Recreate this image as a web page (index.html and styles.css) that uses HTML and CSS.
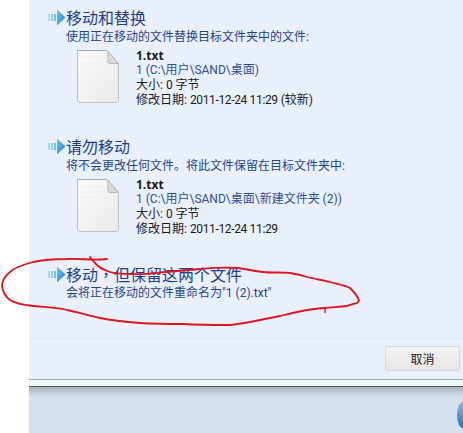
FILE: index.html
```html
<!DOCTYPE html>
<html lang="zh-CN">
<head>
    <meta charset="UTF-8">
    <title>移动文件</title>
    <link rel="stylesheet" href="styles.css">
</head>
<body>
    <svg class="defs" width="0" height="0">
        <defs>
            <linearGradient id="headFill" x1="0" y1="0" x2="1" y2="1">
                <stop offset="0" stop-color="#6cc8f2"/>
                <stop offset="1" stop-color="#1c7fd6"/>
            </linearGradient>
            <linearGradient id="pageFill" x1="0" y1="0" x2="1" y2="1">
                <stop offset="0" stop-color="#fbfbfb"/>
                <stop offset="1" stop-color="#e9e9e9"/>
            </linearGradient>
            <symbol id="arrow" viewBox="0 0 19 17">
                <rect x="1" y="5" width="2" height="7" fill="#a9dcf5"/>
                <rect x="4" y="5" width="2" height="7" fill="#8fd0f2"/>
                <rect x="7" y="5" width="2" height="7" fill="#6fc1ee"/>
                <path d="M10 0.5 L18.5 8.5 L10 16.5 Z" fill="url(#headFill)"/>
            </symbol>
            <symbol id="doc" viewBox="0 0 42 54">
                <path d="M0.5 1.5 H30 L41.5 14 V51 Q41.5 53.5 39 53.5 H3 Q0.5 53.5 0.5 51 Z" fill="url(#pageFill)" stroke="#c0c0c0"/>
                <path d="M0.5 1.5 H30" stroke="#8f8f8f" stroke-dasharray="1 1" fill="none"/>
                <path d="M31 2 V12 Q31 14.5 33 14.5 H41 Z" fill="#dcdcdc" stroke="#b8b8b8"/>
                <path d="M4 8 H27 M4 14 H27 M4 20 H38 M4 26 H38 M4 32 H38 M4 38 H38 M4 44 H38" stroke="#efefef" fill="none"/>
            </symbol>
        </defs>
    </svg>

    <div class="gutter"></div>

    <div class="dialog">
        <div class="options">
            <section class="option option-first">
                <div class="option-title">
                    <svg class="arrow-icon"><use href="#arrow"/></svg>
                    <h2>移动和替换</h2>
                </div>
                <p class="option-desc">使用正在移动的文件替换目标文件夹中的文件:</p>
                <div class="file-info">
                    <svg class="doc-icon"><use href="#doc"/></svg>
                    <div class="file-lines">
                        <div class="file-name">1.txt</div>
                        <div class="file-path">1 (C:\用户\SAND\桌面)</div>
                        <div>大小: 0 字节</div>
                        <div>修改日期: <span class="stamp">2011-12-24 11:29</span> (较新)</div>
                    </div>
                </div>
            </section>

            <section class="option option-second">
                <div class="option-title">
                    <svg class="arrow-icon"><use href="#arrow"/></svg>
                    <h2>请勿移动</h2>
                </div>
                <p class="option-desc">将不会更改任何文件。将此文件保留在目标文件夹中:</p>
                <div class="file-info">
                    <svg class="doc-icon"><use href="#doc"/></svg>
                    <div class="file-lines">
                        <div class="file-name">1.txt</div>
                        <div class="file-path">1 (C:\用户\SAND\桌面\新建文件夹 (2))</div>
                        <div>大小: 0 字节</div>
                        <div>修改日期: <span class="stamp">2011-12-24 11:29</span></div>
                    </div>
                </div>
            </section>

            <section class="option option-third">
                <div class="option-title">
                    <svg class="arrow-icon"><use href="#arrow"/></svg>
                    <h2>移动<span class="mid-comma" lang="zh-TW">，</span>但保留这两个文件</h2>
                </div>
                <p class="option-desc option-desc-tight">会将正在移动的文件重命名为"1 (2).txt"</p>
            </section>
        </div>

        <div class="actions">
            <button class="cancel-btn">取消</button>
        </div>
        <div class="frame-edge"></div>
        <div class="frame-shadow"></div>
        <div class="frame-bottom"></div>
    </div>

    <!-- piece of the desktop orb showing at the right edge -->
    <div class="orb"></div>

    <!-- red pen annotation drawn over the screenshot -->
    <svg class="pen-mark" width="463" height="433" viewBox="0 0 463 433">
        <path d="M107 259 C92 261 80 258 67 259 C52 259 42 260 33 262 C22 265 14 268 10 272 C4 277 2 281 2 286 C3 293 6 297 10 300 C16 304 24 305 33 306 C44 307 55 307 67 310 C78 312 90 316 100 318 C114 321 126 322 140 323 C155 324 170 324 183 324 C200 325 216 325 230 325 C238 324 244 323 250 322 C260 320 270 318 280 316 C296 312 310 309 323 308 C332 307 340 307 347 306 C351 304 354 304 357 303 C359 302 359 300 358 298 C356 294 353 291 350 288 C344 285 337 284 330 282 C322 280 315 279 307 277 C301 275 296 274 290 273 C282 272 272 273 263 272 C254 271 246 269 237 268 C225 267 212 268 200 269 C188 270 178 271 167 272 C155 273 144 275 133 274 C124 274 116 274 110 272 C104 270 100 268 97 265 C94 262 92 260 90 257" fill="none" stroke="#e0141c" stroke-width="1.8" stroke-linecap="round" stroke-linejoin="round"/>
        <path d="M325 307 V313" fill="none" stroke="#e0141c" stroke-width="1.4"/>
    </svg>
</body>
</html>
```

FILE: styles.css
```css
html, body {
    height: 100%;
}

body {
    margin: 0;
    display: flex;
    height: 433px;
    overflow: hidden;
    background-color: white;
    font-family: Roboto, "Noto Sans CJK SC", sans-serif;
    font-size: 12px;
    color: #1a1a1a;
}

.defs {
    position: absolute;
}

.gutter {
    width: 29px;
    flex-shrink: 0;
}

.dialog {
    flex: 1;
    display: flex;
    flex-direction: column;
    background-color: #e9f0fb;
}

.options {
    height: 339px;
    flex-shrink: 0;
    box-sizing: border-box;
    border-bottom: 1px solid #dfe7f4;
}

.option {
    padding-left: 18px;
}

.option-first {
    padding-top: 5px;
}

.option-second {
    padding-top: 26px;
}

.option-third {
    padding-top: 25px;
}

.option-title {
    display: flex;
    align-items: center;
    height: 24px;
}

.arrow-icon {
    width: 19px;
    height: 17px;
    flex-shrink: 0;
}

h2 {
    margin: 0;
    font-size: 16px;
    font-weight: normal;
    font-family: "Noto Sans CJK SC", sans-serif;
    color: #1f3f8f;
}

.mid-comma {
    font-family: "Noto Sans CJK TC", sans-serif;
}

.option-desc {
    margin: 0 0 0 19px;
    line-height: 16px;
    color: #1f4591;
}

.option-desc-tight {
    margin-top: -1px;
}

.file-info {
    display: flex;
    margin: 3px 0 0 30px;
}

.doc-icon {
    width: 42px;
    height: 54px;
    flex-shrink: 0;
    margin-top: 1px;
}

.file-lines {
    margin-left: 17px;
    line-height: 15px;
    white-space: nowrap;
}

.file-name {
    font-family: "Open Sans", sans-serif;
    font-weight: bold;
}

.file-path {
    color: #2a4f9f;
}

.stamp {
    letter-spacing: -0.35px;
}

.actions {
    height: 41px;
    flex-shrink: 0;
    box-sizing: border-box;
    display: flex;
    justify-content: flex-end;
    align-items: flex-start;
    padding: 7px 3px 0 0;
    border-bottom: 1px solid #9ba3ad;
}

.cancel-btn {
    width: 75px;
    height: 25px;
    padding: 0;
    border: 1px solid #d5d8dc;
    border-radius: 2px;
    background: linear-gradient(#f2f2f2, #e6e6e6);
    font-family: "Noto Sans CJK SC", sans-serif;
    font-size: 12px;
    color: #1a1a1a;
}

.frame-edge {
    height: 6px;
    flex-shrink: 0;
    background-color: #f2f6fd;
    border-bottom: 1px solid #55595e;
}

.frame-shadow {
    height: 10px;
    flex-shrink: 0;
    background: linear-gradient(#aab0b8, #d5e0ef);
}

.frame-bottom {
    flex: 1;
    background-color: #d5e0ef;
}

.orb {
    position: absolute;
    left: 457px;
    top: 402px;
    width: 6px;
    height: 26px;
    border-radius: 100% 0 0 100% / 50% 0 0 50%;
    background: linear-gradient(#9bb6d0, #6f9ac2 40%, #2f6fae);
}

.pen-mark {
    position: absolute;
    left: 0;
    top: 0;
}
```
